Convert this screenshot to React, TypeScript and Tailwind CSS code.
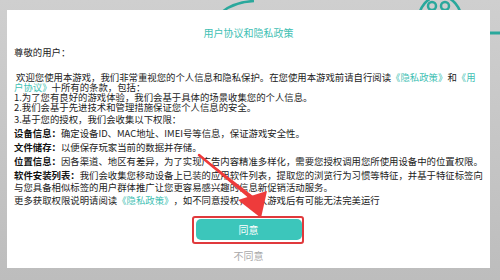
import React from 'react';

const teal = 'inline-block text-[#3fbfb4]';

const Bold = ({ children }: { children: React.ReactNode }) => (
  <span className="inline-block font-bold text-[#111]">{children}</span>
);

const App = () => {
  return (
    <div className="relative w-[500px] h-[280px] overflow-hidden bg-gradient-to-b from-[#cfcfcf] to-[#bdbdbd] font-['Noto_Sans_CJK_SC',sans-serif]">
      {/* decoration behind the dialog */}
      <svg className="absolute left-0 top-0" width="500" height="280">
        <ellipse cx="440" cy="22" rx="22" ry="26" fill="none" stroke="#2aa89c" strokeWidth="2.5" />
        <circle cx="432" cy="6" r="4" fill="none" stroke="#2aa89c" strokeWidth="2.5" />
        <circle cx="445" cy="6" r="4" fill="none" stroke="#2aa89c" strokeWidth="2.5" />
        <path d="M488 33 L500 33" stroke="#2aa89c" strokeWidth="3" />
        <path d="M222 12 Q 234 2 254 1" fill="none" stroke="#2aa89c" strokeWidth="2.5" />
      </svg>

      <div className="absolute left-[7px] top-[10px] w-[483px] h-[258px] bg-white flex flex-col text-[9.4px] leading-[10px] text-[#222]">
        <div className="mt-[17px] text-center text-[10px] leading-[12px] text-[#3fbfb4]">用户协议和隐私政策</div>

        <div className="pl-[7px] whitespace-nowrap">
          <div className="mt-[8px] h-[10px]">尊敬的用户：</div>
          <div className="mt-[15px] h-[10px]">
            &nbsp;欢迎您使用本游戏，我们非常重视您的个人信息和隐私保护。在您使用本游戏前请自行阅读<span className={teal}>《隐私政策》</span>和<span className={teal}>《用</span>
          </div>
          <div className="h-[10px]">
            <span className={teal}>户协议》</span>十所有的条款，包括：
          </div>
          <div className="h-[10px]">1.为了您有良好的游戏体验，我们会基于具体的场景收集您的个人信息。</div>
          <div className="h-[10px]">2.我们会基于先进技术和管理措施保证您个人信息的安全。</div>
          <div className="mt-[2px] h-[10px]">3.基于您的授权，我们会收集以下权限：</div>
          <div className="mt-[2px] h-[14px] leading-[14px]">
            <Bold>设备信息：</Bold>确定设备ID、MAC地址、IMEI号等信息，保证游戏安全性。
          </div>
          <div className="h-[14px] leading-[14px]">
            <Bold>文件储存：</Bold>以便保存玩家当前的数据并存储。
          </div>
          <div className="h-[14px] leading-[14px]">
            <Bold>位置信息：</Bold>因各渠道、地区有差异，为了实现广告内容精准多样化，需要您授权调用您所使用设备中的位置权限。
          </div>
          <div className="h-[13px] leading-[14px]">
            <Bold>软件安装列表：</Bold>我们会收集您移动设备上已装的应用软件列表，提取您的浏览行为习惯等特征，并基于特征标签向
          </div>
          <div className="h-[13px] leading-[13px]">与您具备相似标签的用户群体推广让您更容易感兴趣的信息新促销活动服务。</div>
          <div className="h-[13px] leading-[13px]">
            更多获取权限说明请阅读<span className={teal}>《隐私政策》</span>，如不同意授权，进入游戏后有可能无法完美运行
          </div>
        </div>

        <div className="mt-[12px] flex flex-col items-center">
          <div className="relative">
            <div className="w-[106px] h-[21px] rounded-[5px] bg-[#3cc6bb] flex items-center justify-center text-white text-[10px] leading-[12px]">
              同意
            </div>
            <div className="absolute -left-[4px] -top-[3px] -right-[2px] -bottom-[4px] border-2 border-[#e0393c] rounded-[3px]" />
          </div>
          <div className="mt-[10px] text-[10px] leading-[12px] text-[#a8a8a8]">不同意</div>
        </div>
      </div>

      {/* red annotation arrow */}
      <svg className="absolute left-0 top-0 pointer-events-none" width="500" height="280">
        <path d="M200 155 L253 196 L250 199 Z" fill="#ee3b3b" />
        <path d="M199 155 L252 199" stroke="#ee3b3b" strokeWidth="2.5" strokeLinecap="round" />
        <polygon points="238,200 267,191 261,218" fill="#ee3b3b" />
      </svg>
    </div>
  );
};

export default App;
